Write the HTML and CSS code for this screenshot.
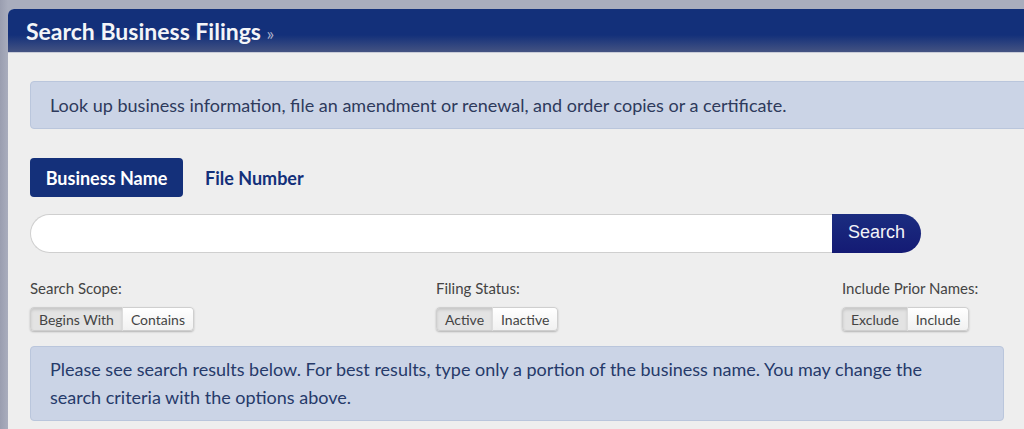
FILE: index.html
```html
<!DOCTYPE html>
<html lang="en">
<head>
  <meta charset="UTF-8" />
  <meta name="viewport" content="width=device-width, initial-scale=1" />
  <title>Search Business Filings</title>
  <link rel="stylesheet" href="styles.css">
</head>
<body>

  <div class="panel">
    <!-- Panel title bar -->
    <div class="panel-header">
      <h1>Search Business Filings <span class="raquo">&raquo;</span></h1>
    </div>

    <div class="panel-body">
      <div class="info-box info-wide">
        Look up business information, file an amendment or renewal, and order copies or a certificate.
      </div>

      <!-- Search type tabs -->
      <div class="tabs">
        <button class="tab active">Business Name</button>
        <button class="tab">File Number</button>
      </div>

      <div class="search-row">
        <input class="search-input" type="text" />
        <button class="search-btn">Search</button>
      </div>

      <!-- Search options -->
      <div class="options">
        <div class="option-col">
          <div class="option-label">Search Scope:</div>
          <div class="btn-group">
            <button class="toggle pressed">Begins With</button>
            <button class="toggle">Contains</button>
          </div>
        </div>
        <div class="option-col">
          <div class="option-label">Filing Status:</div>
          <div class="btn-group">
            <button class="toggle pressed">Active</button>
            <button class="toggle">Inactive</button>
          </div>
        </div>
        <div class="option-col">
          <div class="option-label">Include Prior Names:</div>
          <div class="btn-group">
            <button class="toggle pressed">Exclude</button>
            <button class="toggle">Include</button>
          </div>
        </div>
      </div>

      <div class="info-box info-results">
        Please see search results below. For best results, type only a portion of the business name. You may change the search criteria with the options above.
      </div>
    </div>
  </div>

</body>
</html>
```

FILE: styles.css
```css
html, body {
  overflow: hidden;
}

body {
  margin: 0;
  padding: 9px 0 0 8px;
  background: linear-gradient(to right, #9a9eb0, #a9adbd 8px);
  background-color: #a9adbd;
  font-family: Lato, "Open Sans", Arial, sans-serif;
  height: 420px;
}

/* Panel */
.panel {
  width: 1260px;
  background: #eeeeee;
  border-radius: 6px 0 0 0;
  min-height: 420px;
}

.panel-header {
  height: 44px;
  background: linear-gradient(to bottom, #13307a 0px, #13307a 26px, #475582 44px);
  border-radius: 6px 0 0 0;
  border-bottom: 1px solid #c9ccd8;
  box-sizing: border-box;
}

.panel-header h1 {
  margin: 0;
  padding: 8px 0 0 18px;
  font-size: 23px;
  font-weight: 700;
  color: #f4f5f8;
  line-height: 28px;
}

.raquo {
  font-weight: 400;
  color: #aab2cc;
  font-size: 18px;
}

.panel-body {
  padding: 28px 0 0 22px;
}

/* Info boxes */
.info-box {
  background: #cbd4e6;
  border: 1px solid #bac6dc;
  border-radius: 4px;
  color: #2e3a5c;
  font-size: 18px;
  line-height: 28px;
  padding: 9px 19px;
}

.info-wide {
  width: 1200px;
}

.info-results {
  width: 874px;
  margin-top: 15px;
  padding: 8px 79px 9px 19px;
  color: #263a6a;
}

/* Tabs */
.tabs {
  display: flex;
  align-items: center;
  gap: 8px;
  margin-top: 29px;
}

.tab {
  font-family: Lato, Arial, sans-serif;
  font-size: 18px;
  font-weight: 700;
  height: 39px;
  padding: 0 14px;
  border: none;
  border-radius: 4px;
  background: transparent;
  color: #13307a;
}

.tab.active {
  background: #14307a;
  color: #fff;
  width: 153px;
}

/* Search bar */
.search-row {
  display: flex;
  margin-top: 17px;
}

.search-input {
  width: 802px;
  height: 39px;
  box-sizing: border-box;
  border: 1px solid #cfcfcf;
  border-right: none;
  border-radius: 20px 0 0 20px;
  background: #fff;
  outline: none;
}

.search-btn {
  width: 89px;
  height: 39px;
  border: none;
  border-radius: 0 20px 20px 0;
  background: linear-gradient(to bottom, #1b2d80, #141a74);
  color: #f2f3f8;
  font-family: "Liberation Sans", Arial, sans-serif;
  font-size: 18px;
  padding: 0 0 2px 0;
}

/* Option columns */
.options {
  display: flex;
  margin-top: 25px;
}

.option-col {
  width: 406px;
}

.option-label {
  font-size: 15px;
  color: #444;
  line-height: 20px;
}

.btn-group {
  display: inline-flex;
  margin-top: 9px;
  border-radius: 4px;
  box-shadow: 0 1px 2px rgba(0,0,0,0.25);
  overflow: hidden;
}

.toggle {
  font-family: Lato, Arial, sans-serif;
  font-size: 14px;
  color: #444;
  height: 24px;
  padding: 0 8px;
  border: 1px solid #cfcfcf;
  background: linear-gradient(to bottom, #ffffff, #f1f1f1);
}

.toggle + .toggle {
  border-left: 1px solid #dcdcdc;
}

.toggle:first-child {
  border-radius: 4px 0 0 4px;
}

.toggle:last-child {
  border-radius: 0 4px 4px 0;
}

.toggle.pressed {
  background: #e3e3e3;
  box-shadow: inset 0 2px 3px rgba(0,0,0,0.12);
  border-right: none;
}
```
